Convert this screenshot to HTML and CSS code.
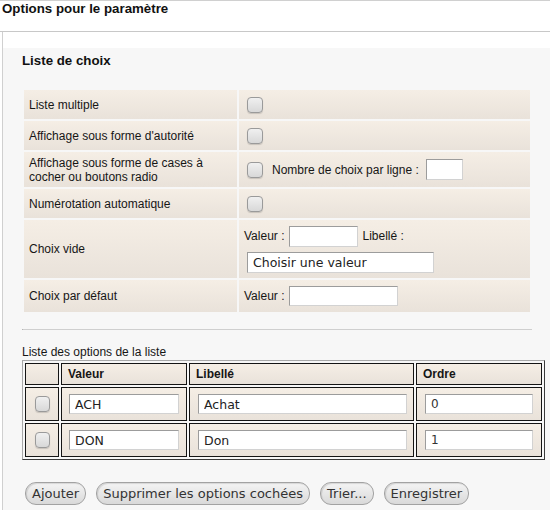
FILE: index.html
```html
<!DOCTYPE html>
<html lang="fr">
<head>
<meta charset="utf-8">
<title>Options pour le paramètre</title>
<link rel="stylesheet" href="styles.css">
</head>
<body>
<div class="head">Options pour le paramètre</div>
<div class="body">
  <div class="panel">
    <div class="title">Liste de choix</div>
    <table class="choices">
      <colgroup><col class="c-lab"><col class="c-val"></colgroup>
      <tr class="h29"><td class="lab">Liste multiple</td><td class="val"><input type="checkbox" class="cb"></td></tr>
      <tr class="h29"><td class="lab">Affichage sous forme d'autorité</td><td class="val"><input type="checkbox" class="cb"></td></tr>
      <tr class="h35"><td class="lab">Affichage sous forme de cases à cocher ou boutons radio</td><td class="val"><div class="line"><input type="checkbox" class="cb"><span class="nb">Nombre de choix par ligne :</span><input type="text" class="txt w37"></div></td></tr>
      <tr class="h29"><td class="lab">Numérotation automatique</td><td class="val"><input type="checkbox" class="cb"></td></tr>
      <tr class="h58"><td class="lab">Choix vide</td><td class="val"><div class="line"><span>Valeur :</span><input type="text" class="txt w69"><span>Libellé :</span></div><div class="line2"><input type="text" class="txt w187" value="Choisir une valeur"></div></td></tr>
      <tr class="h32"><td class="lab">Choix par défaut</td><td class="val"><div class="line"><span>Valeur :</span><input type="text" class="txt w109 h20"></div></td></tr>
    </table>
    <div class="sep"></div>
    <div class="caption">Liste des options de la liste</div>
    <table class="opts">
      <colgroup><col class="o1"><col class="o2"><col class="o3"><col class="o4"></colgroup>
      <tr class="oh"><th></th><th>Valeur</th><th>Libellé</th><th>Ordre</th></tr>
      <tr class="or"><td class="ck"><input type="checkbox" class="cb small"></td><td><input type="text" class="txt w110" value="ACH"></td><td><input type="text" class="txt w209 sh" value="Achat"></td><td><input type="text" class="txt w108 sh num" value="0"></td></tr>
      <tr class="or"><td class="ck"><input type="checkbox" class="cb small"></td><td><input type="text" class="txt w110" value="DON"></td><td><input type="text" class="txt w209 sh" value="Don"></td><td><input type="text" class="txt w108 sh num" value="1"></td></tr>
    </table>
    <div class="buttons">
      <button class="btn">Ajouter</button>
      <button class="btn">Supprimer les options cochées</button>
      <button class="btn">Trier...</button>
      <button class="btn">Enregistrer</button>
    </div>
  </div>
</div>
</body>
</html>
```
FILE: styles.css
```css
* { box-sizing: border-box; }
html, body { margin: 0; padding: 0; }
body {
  width: 550px;
  height: 510px;
  overflow: hidden;
  background: #fff;
  color: #161616;
  font-family: "Liberation Sans", Arial, sans-serif;
  font-size: 12px;
}
.head {
  height: 32px;
  border-top: 1px solid #d0d0d0;
  border-bottom: 1px solid #c8c8c8;
  padding-left: 2px;
  font-weight: bold;
  font-size: 13.3px;
  line-height: 15px;
  color: #111;
}
.body {
  margin-left: 2px;
  border-left: 1px solid #d0d0d0;
  padding-top: 16px;
  height: 478px;
}
.panel {
  background: #f7f7f7;
  height: 100%;
  padding: 5px 0 0 19px;
}
.title {
  font-weight: bold;
  font-size: 13.3px;
  line-height: 16px;
  color: #111;
}
.choices {
  margin-top: 19px;
  width: 510px;
  table-layout: fixed;
  border-collapse: separate;
  border-spacing: 2px;
}
.c-lab { width: 213px; }
.c-val { width: 291px; }
.choices td {
  padding: 0 5px;
  vertical-align: middle;
  line-height: 14px;
  background: linear-gradient(#f5eee5, #e9e2da);
}
.h29 td { height: 29px; }
.h35 td { height: 35px; }
.h58 td { height: 58px; }
.h32 td { height: 32px; }
.cb {
  -webkit-appearance: none;
  appearance: none;
  display: block;
  width: 16px;
  height: 16px;
  margin: 0 0 0 3px;
  border: 1px solid #9a9a9a;
  border-radius: 4px;
  background: linear-gradient(#f0f0f0, #d8d8d8);
  box-shadow: 0 1px 1px rgba(0,0,0,0.15);
}
.cb.small {
  width: 15px;
  height: 16px;
  margin: 0 auto;
}
.line {
  display: flex;
  align-items: center;
  gap: 4px;
}
.nb { margin-left: 5px; margin-right: 3px; }
.line2 { margin-top: 5px; }
.line2 .txt { margin-left: 3px; }
.txt {
  display: block;
  height: 21px;
  padding: 0 5px;
  border: 1px solid;
  border-color: #9c9c9c #d2d2d2 #d2d2d2 #9c9c9c;
  background: #fff;
  font-family: "DejaVu Sans", Verdana, sans-serif;
  font-size: 12.5px;
  color: #222;
  outline: none;
}
.w37 { width: 37px; }
.w69 { width: 69px; margin-left: 1px; }
.w187 { width: 187px; }
.w109 { width: 109px; margin-left: 1px; }
.h20 { height: 20px; }
.w110 { width: 110px; height: 20px; margin-left: 1px; }
.w209 { width: 209px; height: 20px; }
.w108 { width: 108px; height: 20px; }
.sh { margin-left: 2px; }
.num { font-size: 12px; color: #333; }
.sep {
  margin-top: 15px;
  width: 510px;
  border-top: 1px solid #cfcfcf;
  border-left: 1px solid #999;
  height: 1px;
}
.caption {
  margin-top: 15px;
  line-height: 14px;
}
.opts {
  margin-top: 1px;
  width: 523px;
  table-layout: fixed;
  border-collapse: separate;
  border-spacing: 2px;
  border: 1px solid;
  border-color: #a8a8a8 #3a3a3a #3a3a3a #a8a8a8;
}
.o1 { width: 34px; }
.o2 { width: 126px; }
.o3 { width: 225px; }
.o4 { width: 126px; }
.opts th, .opts td {
  border: 1px solid #141414;
  background: linear-gradient(#f5eee5, #e9e2da);
  padding: 0 0 0 6px;
  vertical-align: middle;
}
.opts th {
  height: 22px;
  text-align: left;
  font-weight: bold;
  font-size: 12px;
}
.opts td { height: 34px; }
.opts td.ck { padding: 0; }
.buttons {
  margin-top: 22px;
  margin-left: 3px;
  display: flex;
  gap: 10px;
}
.btn {
  height: 23px;
  padding: 0 6px;
  border: 1px solid #a2a2a2;
  border-radius: 11px;
  background: linear-gradient(#f4f4f4, #d9d9d9);
  box-shadow: inset 1px 1px 1px rgba(0,0,0,0.12);
  font-family: "DejaVu Sans", Verdana, sans-serif;
  font-size: 13px;
  color: #333;
  line-height: 20px;
}
```
